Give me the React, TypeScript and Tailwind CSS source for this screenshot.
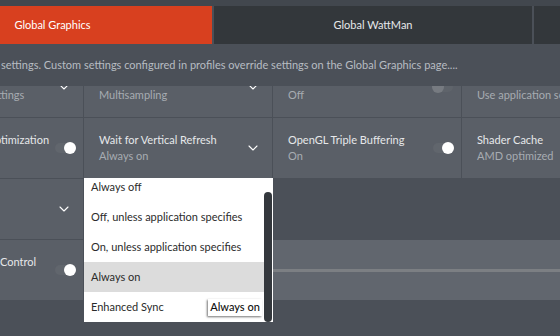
import { ChevronDown } from 'lucide-react'

type CellProps = {
  title?: string
  value?: string
  dimValue?: boolean
  control?: 'chevron' | 'toggle-on' | 'toggle-off' | 'toggle-dim'
}

function Toggle({ on, dim }: { on: boolean; dim?: boolean }) {
  return (
    <div className={`relative w-[20px] h-[10px] rounded-full ${dim ? 'bg-[#5f646b]' : 'bg-[#61666d]'}`}>
      <div
        className={`absolute top-[-1px] w-[12px] h-[12px] rounded-full ${
          on ? 'right-[-1px]' : 'left-[-1px]'
        } ${dim ? 'bg-[#777b81]' : 'bg-white'}`}
      />
    </div>
  )
}

function Cell({ title, value, dimValue, control }: CellProps) {
  return (
    <div className="h-[60px] bg-[#5a5f67] flex items-center justify-between pl-[15px] pr-[8px]">
      <div className="flex flex-col leading-[16px] text-[11px] whitespace-nowrap">
        <span className="text-[#e6e8ea]">{title || '\u00a0'}</span>
        <span className={dimValue ? 'text-[#666b72]' : 'text-[#a7acb2]'}>{value || '\u00a0'}</span>
      </div>
      {control === 'chevron' && (
        <ChevronDown className="w-[16px] h-[16px] text-white mr-[3px]" strokeWidth={1.6} />
      )}
      {control === 'toggle-on' && <Toggle on />}
      {control === 'toggle-off' && <Toggle on={false} />}
      {control === 'toggle-dim' && <Toggle on={false} dim />}
    </div>
  )
}

const OPTIONS = [
  'Always off',
  'Off, unless application specifies',
  'On, unless application specifies',
  'Always on',
  'Enhanced Sync',
]

export default function App() {
  return (
    <div className="relative w-[560px] h-[336px] overflow-hidden bg-[#4b5058] font-['Lato',sans-serif]">
      <div className="h-[6px] bg-[#42474e]" />

      <div className="flex gap-[2px] h-[38px] ml-[-107px]">
        <div className="w-[319px] shrink-0 bg-[#d8401f] text-white text-[11px] flex items-center justify-center">
          Global Graphics
        </div>
        <div className="w-[318px] shrink-0 bg-[#33373b] text-[#e6e8ea] text-[11px] flex items-center justify-center">
          Global WattMan
        </div>
        <div className="w-[319px] shrink-0 bg-[#33373b]" />
      </div>

      <div className="h-[42px] flex items-center pl-[1px] text-[11px] text-[#b7bcc2] whitespace-nowrap">
        settings. Custom settings configured in profiles override settings on the Global Graphics page....
      </div>

      {/* settings list, scrolled so the first row's titles sit under the header */}
      <div className="h-[250px] overflow-hidden">
        <div className="mt-[-29px] ml-[-105px] grid grid-cols-[188px_188px_188px_188px] gap-[1px]">
          <Cell value="Use application settings" control="chevron" />
          <Cell value="Multisampling" control="chevron" />
          <Cell value="Off" control="toggle-dim" />
          <Cell value="Use application settings" control="chevron" />

          <Cell title="Surface Format Optimization" control="toggle-on" />
          <Cell title="Wait for Vertical Refresh" value="Always on" control="chevron" />
          <Cell title="OpenGL Triple Buffering" value="On" control="toggle-on" />
          <Cell title="Shader Cache" value="AMD optimized" control="chevron" />

          <Cell control="chevron" />
          <div className="col-span-3 h-[60px]" />

          <Cell title="Frame Rate Target Control" value="Disabled" dimValue control="toggle-on" />
          <div className="col-span-3 h-[60px] bg-[#61666e] flex items-center">
            <div className="w-full h-[3px] bg-[#7c7f83]" />
          </div>
        </div>
      </div>

      <div className="absolute left-[84px] top-[178px] w-[189px] h-[144px] bg-white overflow-hidden">
        <div className="mt-[-6px] mr-[9px]">
          {OPTIONS.map((o) => (
            <div
              key={o}
              className={`h-[30px] px-[7px] flex items-center text-[11px] text-[#2b2b2b] whitespace-nowrap ${
                o === 'Always on' ? 'bg-[#dcdcdc]' : ''
              }`}
            >
              {o}
            </div>
          ))}
        </div>
        <div className="absolute right-[1px] top-[14px] bottom-0 w-[8px] rounded-full bg-[#34383d]" />
        <div className="absolute left-[124px] top-[121px] w-[54px] h-[17px] bg-white shadow-[-1px_1px_2px_rgba(0,0,0,0.55)] flex items-center justify-center text-[11px] text-[#111] font-medium">
          Always on
        </div>
      </div>
    </div>
  )
}
